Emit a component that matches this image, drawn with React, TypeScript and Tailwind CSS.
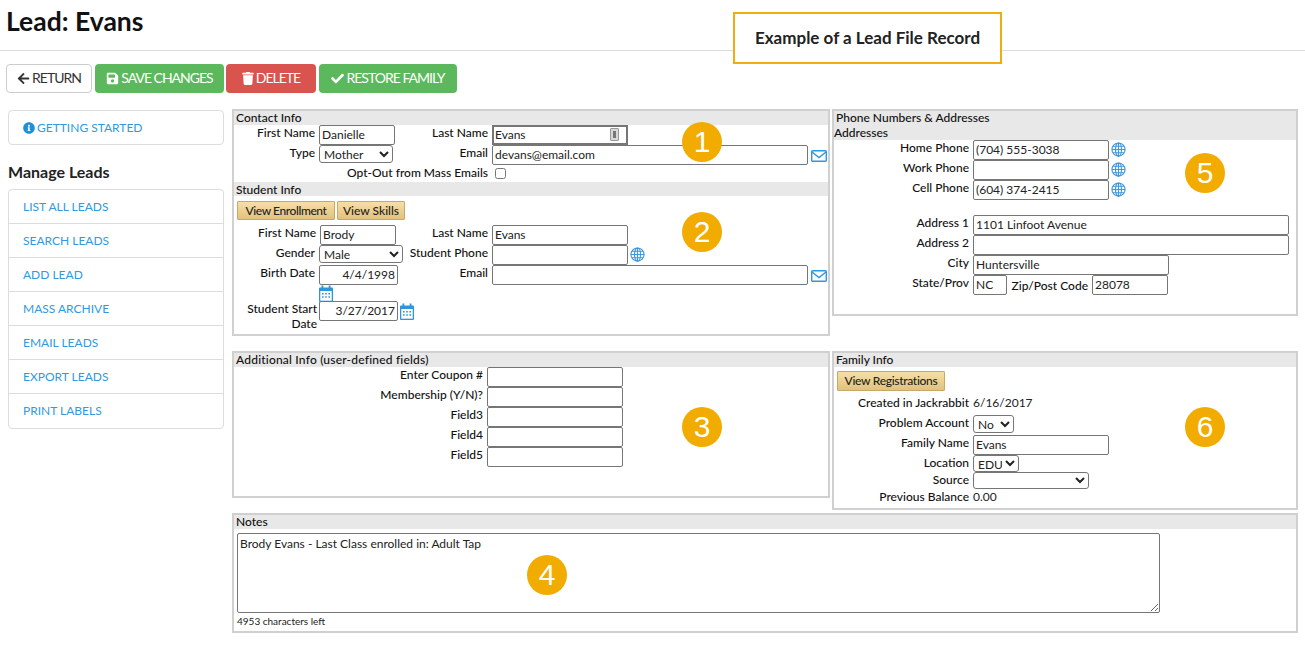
import { FaArrowLeft, FaSave, FaTrash, FaCheck, FaInfoCircle } from "react-icons/fa";

const field = "block h-5 box-border shrink-0 border border-[#767676] rounded-[2px] px-[2px] pb-[2px] text-xs leading-none text-[#222] bg-white outline-none font-[Lato,sans-serif]";
const selBase = "block box-border shrink-0 border border-[#767676] rounded-[3px] text-xs text-[#222] bg-white outline-none font-[Lato,sans-serif]";
const sel = selBase + " pb-[3px]";
const lbl = "text-xs leading-4 font-medium text-[#111] text-right pr-1";
const panel = "relative box-border border-2 border-[#d0d0d0] bg-white";
const head = "bg-[#e8e8e8] h-[14px] text-xs leading-[13px] font-medium text-[#111] pl-[2px]";
const headStudent = "bg-[#e8e8e8] h-[14px] mt-[-3px] text-xs leading-[15px] font-medium text-[#111] pl-[2px]";
const goldBtn = "block box-border border border-[#c5a86a] bg-gradient-to-b from-[#f5dfa8] to-[#e3c17c] text-xs leading-none font-medium text-[#222] rounded-[1px] font-[Lato,sans-serif]";

function Globe() {
  return (
    <svg viewBox="0 0 16 16" className="w-[15px] h-[15px] ml-[2px] mt-[2px] shrink-0" fill="none" stroke="#3f97dc" strokeWidth="1.2">
      <circle cx="8" cy="8" r="7" />
      <ellipse cx="8" cy="8" rx="3.2" ry="7" />
      <path d="M8 1v14M1 8h14M2 4.5h12M2 11.5h12" />
    </svg>
  );
}
function Mail() {
  return (
    <svg viewBox="0 0 16 12" className="w-4 h-3 ml-[3px] mt-[5px] shrink-0" fill="none" stroke="#2f95dc" strokeWidth="1.4">
      <rect x="0.7" y="0.7" width="14.6" height="10.6" rx="1" />
      <path d="M1 2l7 5.5L15 2" />
    </svg>
  );
}
function Cal({ className }: { className: string }) {
  return (
    <svg viewBox="0 0 14 17" className={className}>
      <path d="M0 3.5a1 1 0 0 1 1-1h12a1 1 0 0 1 1 1V16a1 1 0 0 1-1 1H1a1 1 0 0 1-1-1z" fill="#2f95dc" />
      <rect x="2.5" y="0.5" width="1.8" height="3.5" fill="#2f95dc" />
      <rect x="9.7" y="0.5" width="1.8" height="3.5" fill="#2f95dc" />
      <rect x="1.3" y="6" width="11.4" height="9.7" fill="#fff" />
      <path d="M3 8h1.6v1.6H3zM6.2 8h1.6v1.6H6.2zM9.4 8H11v1.6H9.4zM3 11.2h1.6v1.6H3zM6.2 11.2h1.6v1.6H6.2zM9.4 11.2H11v1.6H9.4z" fill="#2f95dc" />
    </svg>
  );
}
function Badge({ n, className }: { n: string; className: string }) {
  return (
    <div className={"absolute w-10 h-10 rounded-full bg-[#f2ac00] text-white flex items-center justify-center text-[30px] leading-none font-['Liberation_Sans',sans-serif] " + className}>
      {n}
    </div>
  );
}
function Btn({ icon, text, className }: { icon: React.ReactNode; text: string; className: string }) {
  return (
    <button className={"h-[29px] box-border flex items-center justify-center rounded-[4px] pb-px text-sm tracking-[-1px] " + className}>
      {icon}
      {text}
    </button>
  );
}

const rows2 = "flex h-5";

function ContactInfo() {
  return (
    <div className={panel + " h-[227px]"}>
      <div className={head}>Contact Info</div>
      <div>
        <div className={rows2}>
          <div className={lbl + " w-[85px]"}>First Name</div>
          <div className="w-[173px] flex">
            <input readOnly value="Danielle" className={field + " w-[76px]"} />
            <div className={lbl + " flex-1"}>Last Name</div>
          </div>
          <div className="relative w-[136px] shrink-0">
            <input readOnly value="Evans" className={field + " w-[136px] border-2 border-[#333] rounded-none px-px"} />
            <div className="absolute right-[9px] top-[3px] w-[9px] h-[13px] rounded-[1px] border border-[#9a9a9a] bg-[#d8d8d8] flex items-center justify-center">
              <div className="w-[3px] h-[7px] bg-[#777]" />
            </div>
          </div>
        </div>
        <div className={rows2}>
          <div className={lbl + " w-[85px]"}>Type</div>
          <div className="w-[173px] flex">
            <select className={sel + " w-[74px] h-[18px]"} defaultValue="Mother">
              <option>Mother</option>
            </select>
            <div className={lbl + " flex-1"}>Email</div>
          </div>
          <input readOnly value="devans@email.com" className={field + " w-[316px]"} />
          <Mail />
        </div>
        <div className={rows2}>
          <div className={lbl + " w-[258px]"}>Opt-Out from Mass Emails</div>
          <input type="checkbox" className="ml-[3px] mt-[3px] w-[11px] h-[11px] appearance-auto shrink-0" />
        </div>
      </div>
      <div className={headStudent}>Student Info</div>
      <div className="flex gap-[2px] pl-[3px] pt-[5px] pb-[5px]">
        <button className={goldBtn + " w-[98px] h-[19px] tracking-[-0.4px]"}>View Enrollment</button>
        <button className={goldBtn + " w-[68px] h-[19px]"}>View Skills</button>
      </div>
      <div className={rows2}>
        <div className={lbl + " w-[86px]"}>First Name</div>
        <div className="w-[172px] flex">
          <input readOnly value="Brody" className={field + " w-[76px]"} />
          <div className={lbl + " flex-1"}>Last Name</div>
        </div>
        <input readOnly value="Evans" className={field + " w-[136px]"} />
      </div>
      <div className={rows2}>
        <div className={lbl + " w-[85px]"}>Gender</div>
        <div className="w-[173px] flex">
          <select className={sel + " w-[84px] h-[18px]"} defaultValue="Male">
            <option>Male</option>
          </select>
          <div className={lbl + " flex-1"}>Student Phone</div>
        </div>
        <input readOnly className={field + " w-[136px]"} />
        <Globe />
      </div>
      <div className={rows2}>
        <div className={lbl + " w-[85px]"}>Birth Date</div>
        <div className="w-[173px] flex">
          <input readOnly value="4/4/1998" className={field + " w-[79px] text-right"} />
          <div className={lbl + " flex-1"}>Email</div>
        </div>
        <input readOnly value="" className={field + " w-[316px]"} />
        <Mail />
      </div>
      <div className="pl-[85px] h-4">
        <Cal className="w-[14px] h-[17px]" />
      </div>
      <div className="flex">
        <div className="w-[85px] text-xs leading-[15px] font-medium text-[#111] text-right pr-[2px]">Student Start Date</div>
        <input readOnly value="3/27/2017" className={field + " w-[79px] text-right"} />
        <Cal className="w-[14px] h-[17px] ml-[2px] mt-[2px]" />
      </div>
      <Badge n="1" className="left-[448px] top-[11px]" />
      <Badge n="2" className="left-[448px] top-[101px]" />
    </div>
  );
}

function AdditionalInfo() {
  const items = ["Enter Coupon #", "Membership (Y/N)?", "Field3", "Field4", "Field5"];
  return (
    <div className={panel + " h-[147px]"}>
      <div className={head + " tracking-[0.2px]"}>Additional Info (user-defined fields)</div>
      {items.map((t) => (
        <div key={t} className={rows2}>
          <div className={lbl + " w-[253px]"}>{t}</div>
          <input readOnly className={field + " w-[136px]"} />
        </div>
      ))}
      <Badge n="3" className="left-[448px] top-[54px]" />
    </div>
  );
}

function Phones() {
  const r = (label: string, value: string) => (
    <div key={label} className={rows2}>
      <div className={lbl + " w-[139px]"}>{label}</div>
      <input readOnly value={value} className={field + " w-[136px]"} />
      <Globe />
    </div>
  );
  return (
    <div className={panel + " h-[207px]"}>
      <div className="bg-[#e8e8e8] h-[29px] text-xs leading-[15px] font-medium text-[#111]">
        <div className="pl-[2px] -translate-y-px">Phone Numbers &amp; Addresses</div>
        <div className="-translate-y-px">Addresses</div>
      </div>
      {r("Home Phone", "(704) 555-3038")}
      {r("Work Phone", "")}
      {r("Cell Phone", "(604) 374-2415")}
      <div className="h-[15px]" />
      <div className={rows2}>
        <div className={lbl + " w-[139px]"}>Address 1</div>
        <input readOnly value="1101 Linfoot Avenue" className={field + " w-[316px]"} />
      </div>
      <div className={rows2}>
        <div className={lbl + " w-[139px]"}>Address 2</div>
        <input readOnly className={field + " w-[316px]"} />
      </div>
      <div className={rows2}>
        <div className={lbl + " w-[139px]"}>City</div>
        <input readOnly value="Huntersville" className={field + " w-[196px]"} />
      </div>
      <div className={rows2}>
        <div className={lbl + " w-[139px]"}>State/Prov</div>
        <input readOnly value="NC" className={field + " w-[34px]"} />
        <div className={lbl + " w-[85px] mt-[3px]"}>Zip/Post Code</div>
        <input readOnly value="28078" className={field + " w-[76px]"} />
      </div>
      <Badge n="5" className="left-[351px] top-[42px]" />
    </div>
  );
}

function FamilyInfo() {
  return (
    <div className={panel + " h-[159px]"}>
      <div className={head}>Family Info</div>
      <div className="pl-[3px] pt-1">
        <button className={goldBtn + " w-[108px] h-5 tracking-[-0.3px]"}>View Registrations</button>
      </div>
      <div className="flex h-5 mt-1">
        <div className={lbl + " w-[139px]"}>Created in Jackrabbit</div>
        <div className="text-xs leading-4 text-[#222]">6/16/2017</div>
      </div>
      <div className="flex h-5">
        <div className={lbl + " w-[139px]"}>Problem Account</div>
        <select className={sel + " w-[41px] h-[18px]"} defaultValue="No">
          <option>No</option>
        </select>
      </div>
      <div className={rows2}>
        <div className={lbl + " w-[139px]"}>Family Name</div>
        <input readOnly value="Evans" className={field + " w-[136px]"} />
      </div>
      <div className="flex h-[17px]">
        <div className={lbl + " w-[139px]"}>Location</div>
        <select className={selBase + " w-[46px] h-[17px]"} defaultValue="EDU">
          <option>EDU</option>
        </select>
      </div>
      <div className="flex h-[17px]">
        <div className={lbl + " w-[139px]"}>Source</div>
        <select className={selBase + " w-[116px] h-[17px]"} />
      </div>
      <div className="flex">
        <div className={lbl + " w-[139px]"}>Previous Balance</div>
        <div className="text-xs leading-4 text-[#222]">0.00</div>
      </div>
      <Badge n="6" className="left-[351px] top-[54px]" />
    </div>
  );
}

function Notes() {
  return (
    <div className={panel + " h-[120px]"}>
      <div className={head}>Notes</div>
      <div className="pl-[3px] pt-1">
        <textarea
          readOnly
          value="Brody Evans - Last Class enrolled in: Adult Tap"
          className="block box-border w-[923px] h-20 border border-[#767676] rounded-[2px] px-[2px] py-[2px] text-xs leading-[15px] text-[#222] outline-none resize-y font-[Lato,sans-serif]"
        />
      </div>
      <div className="pl-[3px] pt-[2px] text-[10px] leading-[13px] text-[#222]">4953 characters left</div>
      <Badge n="4" className="left-[293px] top-[40px]" />
    </div>
  );
}

export default function App() {
  const side = ["LIST ALL LEADS", "SEARCH LEADS", "ADD LEAD", "MASS ARCHIVE", "EMAIL LEADS", "EXPORT LEADS", "PRINT LABELS"];
  return (
    <div className="relative w-[1305px] h-[645px] overflow-hidden bg-white font-[Lato,sans-serif]">
      <div className="h-[51px] box-border border-b border-[#dcdcdc] pl-[6px] pt-[3px]">
        <h1 className="text-[26.5px] leading-[36px] font-bold text-[#111]">Lead: Evans</h1>
      </div>
      <div className="absolute left-[733px] top-[12px] w-[269px] h-[52px] box-border border-2 border-[#efad10] bg-white flex items-center justify-center text-[17px] font-bold text-[#222]">
        Example of a Lead File Record
      </div>
      <div className="flex pl-[6px] pt-[13px] gap-[3px]">
        <Btn
          icon={<FaArrowLeft className="w-[13px] h-[13px] mr-[2px]" />}
          text="RETURN"
          className="w-[86px] bg-white border border-[#cccccc] text-[#333]"
        />
        <Btn icon={<FaSave className="w-[13px] h-[13px] mr-[2px]" />} text="SAVE CHANGES" className="w-[129px] bg-[#5cb85c] text-white" />
        <Btn icon={<FaTrash className="w-[12px] h-[13px] mr-[2px]" />} text="DELETE" className="w-[90px] ml-[-1px] bg-[#d9534f] text-white" />
        <Btn icon={<FaCheck className="w-[13px] h-[13px] mr-[2px]" />} text="RESTORE FAMILY" className="w-[138px] bg-[#5cb85c] text-white" />
      </div>
      <div className="flex pt-4">
        <aside className="w-[216px] ml-2 shrink-0 pt-px">
          <div className="h-[35px] box-border border border-[#dddddd] rounded-[4px] flex items-center pl-[14px] text-xs text-[#2f9ae0]">
            <FaInfoCircle className="w-3 h-3 mr-[2px] text-[#1f8fd8]" />
            GETTING STARTED
          </div>
          <h2 className="mt-[17px] text-base leading-5 font-bold text-[#222]">Manage Leads</h2>
          <div className="mt-[7px] border border-[#dddddd] rounded-[4px] box-border">
            {side.map((s, i) => (
              <div
                key={s}
                className={"h-[34px] box-border flex items-center pl-[14px] text-xs text-[#2f9ae0] " + (i < 6 ? "border-b border-[#dddddd]" : "")}
              >
                {s}
              </div>
            ))}
          </div>
        </aside>
        <main className="ml-2 w-[1066px]">
          <div className="grid grid-cols-[598px_466px] gap-x-[2px] grid-rows-[242px_162px] items-start">
            <ContactInfo />
            <Phones />
            <AdditionalInfo />
            <FamilyInfo />
          </div>
          <Notes />
        </main>
      </div>
    </div>
  );
}
